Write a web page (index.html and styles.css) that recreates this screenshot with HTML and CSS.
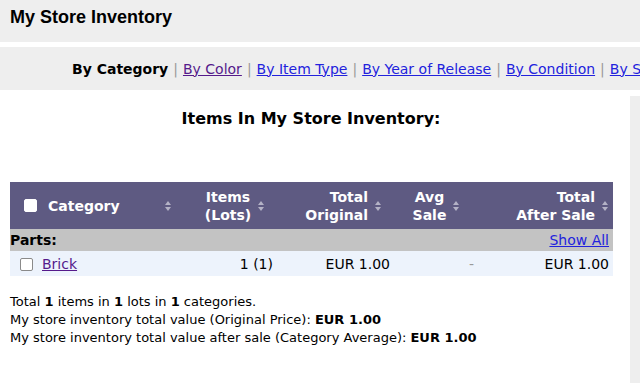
FILE: index.html
```html
<!DOCTYPE html>
<html>

<head>
    <title>My Store Inventory</title>
    <meta name="viewport" content="width=device-width, initial-scale=1.0">
    <link rel="stylesheet" href="styles.css">
</head>

<body>
    <div class="top-bar">
        <h1>My Store Inventory</h1>
    </div>

    <div class="nav">
        <b>By Category</b>
        <span class="sep">|</span> <a href="#" class="visited">By Color</a>
        <span class="sep">|</span> <a href="#">By Item Type</a>
        <span class="sep">|</span> <a href="#">By Year of Release</a>
        <span class="sep">|</span> <a href="#">By Condition</a>
        <span class="sep">|</span> <a href="#">By Subcondition</a>
    </div>

    <div class="page">
        <div class="main">
            <h2>Items In My Store Inventory:</h2>

            <table class="inventory">
                <thead>
                    <tr>
                        <th class="col-cat">
                            <div class="th-inner left">
                                <span class="box white"></span>
                                <span class="th-text">Category</span>
                                <span class="sort sort-cat"></span>
                            </div>
                        </th>
                        <th class="col-items">
                            <div class="th-inner center">
                                <span class="th-text">Items<br>(Lots)</span>
                                <span class="sort"></span>
                            </div>
                        </th>
                        <th class="col-orig">
                            <div class="th-inner right">
                                <span class="th-text">Total<br>Original</span>
                                <span class="sort"></span>
                            </div>
                        </th>
                        <th class="col-avg">
                            <div class="th-inner center">
                                <span class="th-text">Avg<br>Sale</span>
                                <span class="sort"></span>
                            </div>
                        </th>
                        <th class="col-after">
                            <div class="th-inner right">
                                <span class="th-text">Total<br>After Sale</span>
                                <span class="sort"></span>
                            </div>
                        </th>
                    </tr>
                </thead>
                <tbody>
                    <tr class="group-row">
                        <td colspan="4"><b>Parts:</b></td>
                        <td class="num"><a href="#">Show All</a></td>
                    </tr>
                    <tr class="item-row">
                        <td class="cat-cell"><span class="box"></span><a href="#" class="visited">Brick</a></td>
                        <td class="num">1 (1)</td>
                        <td class="num">EUR 1.00</td>
                        <td class="num dash">-</td>
                        <td class="num">EUR 1.00</td>
                    </tr>
                </tbody>
            </table>

            <div class="summary">
                Total <b>1</b> items in <b>1</b> lots in <b>1</b> categories.<br>
                My store inventory total value (Original Price): <b>EUR 1.00</b><br>
                My store inventory total value after sale (Category Average): <b>EUR 1.00</b>
            </div>
        </div>
        <div class="side"></div>
    </div>
</body>

</html>
```

FILE: styles.css
```css
body {
    margin: 0;
    font-family: "DejaVu Sans", Verdana, sans-serif;
    font-size: 13px;
    color: #000;
    background-color: #fff;
    overflow: hidden;
}

a {
    color: #2222dd;
}

a.visited {
    color: #551a8b;
}

.top-bar {
    background-color: #eeeeee;
    height: 42px;
    padding: 0 10px;
    display: flex;
    align-items: center;
}

.top-bar h1 {
    margin: 0;
    margin-top: -7px;
    font-family: "Liberation Sans", Arial, sans-serif;
    font-size: 18px;
    font-weight: bold;
}

.nav {
    margin-top: 5px;
    background-color: #eeeeee;
    height: 43px;
    padding-left: 72px;
    display: flex;
    align-items: center;
    gap: 5px;
    white-space: nowrap;
    overflow: hidden;
    font-size: 14px;
}

.nav .sep {
    color: #999;
}

.page {
    display: flex;
}

.main {
    width: 602px;
    padding: 0 18px 0 10px;
}

.side {
    flex: 1;
    background-color: #eeeeee;
    margin-top: 6px;
    height: 300px;
}

h2 {
    margin: 18px 0 0;
    font-size: 16px;
    text-align: center;
    line-height: 22px;
}

.inventory {
    margin-top: 52px;
    width: 603px;
    border-collapse: collapse;
    table-layout: fixed;
}

.inventory th {
    background-color: #5e5a82;
    color: #fff;
    font-size: 14px;
    height: 47px;
    padding: 0 5px;
    line-height: 18px;
}

.col-cat { width: 160px; }
.col-items { width: 75px; }
.col-orig { width: 99px; }
.col-avg { width: 74px; }

.inventory th.col-items {
    padding-left: 17px;
}

.inventory th.col-orig {
    padding-right: 13px;
}

.th-inner {
    display: flex;
    align-items: center;
    gap: 7px;
}

.th-inner.left {
    justify-content: flex-start;
}

.th-inner.center {
    justify-content: center;
}

.th-inner.right {
    justify-content: flex-end;
}

.th-inner.right .th-text {
    text-align: right;
}

.th-text {
    margin-top: 1px;
}

.sort {
    width: 0;
    height: 10px;
    position: relative;
    padding: 0 3px;
}

.sort::before,
.sort::after {
    content: "";
    position: absolute;
    left: 0;
    border-left: 3.5px solid transparent;
    border-right: 3.5px solid transparent;
}

.sort::before {
    top: 0;
    border-bottom: 4px solid #b4b2c6;
}

.sort::after {
    bottom: 0;
    border-top: 4px solid #b4b2c6;
}

.sort-cat {
    margin-left: auto;
    margin-right: 4px;
}

.box {
    display: inline-block;
    width: 11px;
    height: 11px;
    border: 1px solid #8a8a8a;
    border-radius: 2px;
    background-color: #fff;
    vertical-align: -2px;
}

.box.white {
    border-color: #fff;
    margin-left: 9px;
    margin-right: 4px;
}

.group-row td {
    background-color: #c3c3c3;
    height: 22px;
    padding: 0 4px 0 0;
    font-size: 14px;
}

.item-row td {
    background-color: #edf3fc;
    height: 25px;
    padding: 0 4px;
    font-size: 14px;
}

.item-row .cat-cell {
    padding-left: 10px;
}

.item-row .cat-cell .box {
    margin-right: 9px;
}

.num {
    text-align: right;
}

.dash {
    color: #999;
}

.summary {
    margin-top: 17px;
    line-height: 18px;
}
```
